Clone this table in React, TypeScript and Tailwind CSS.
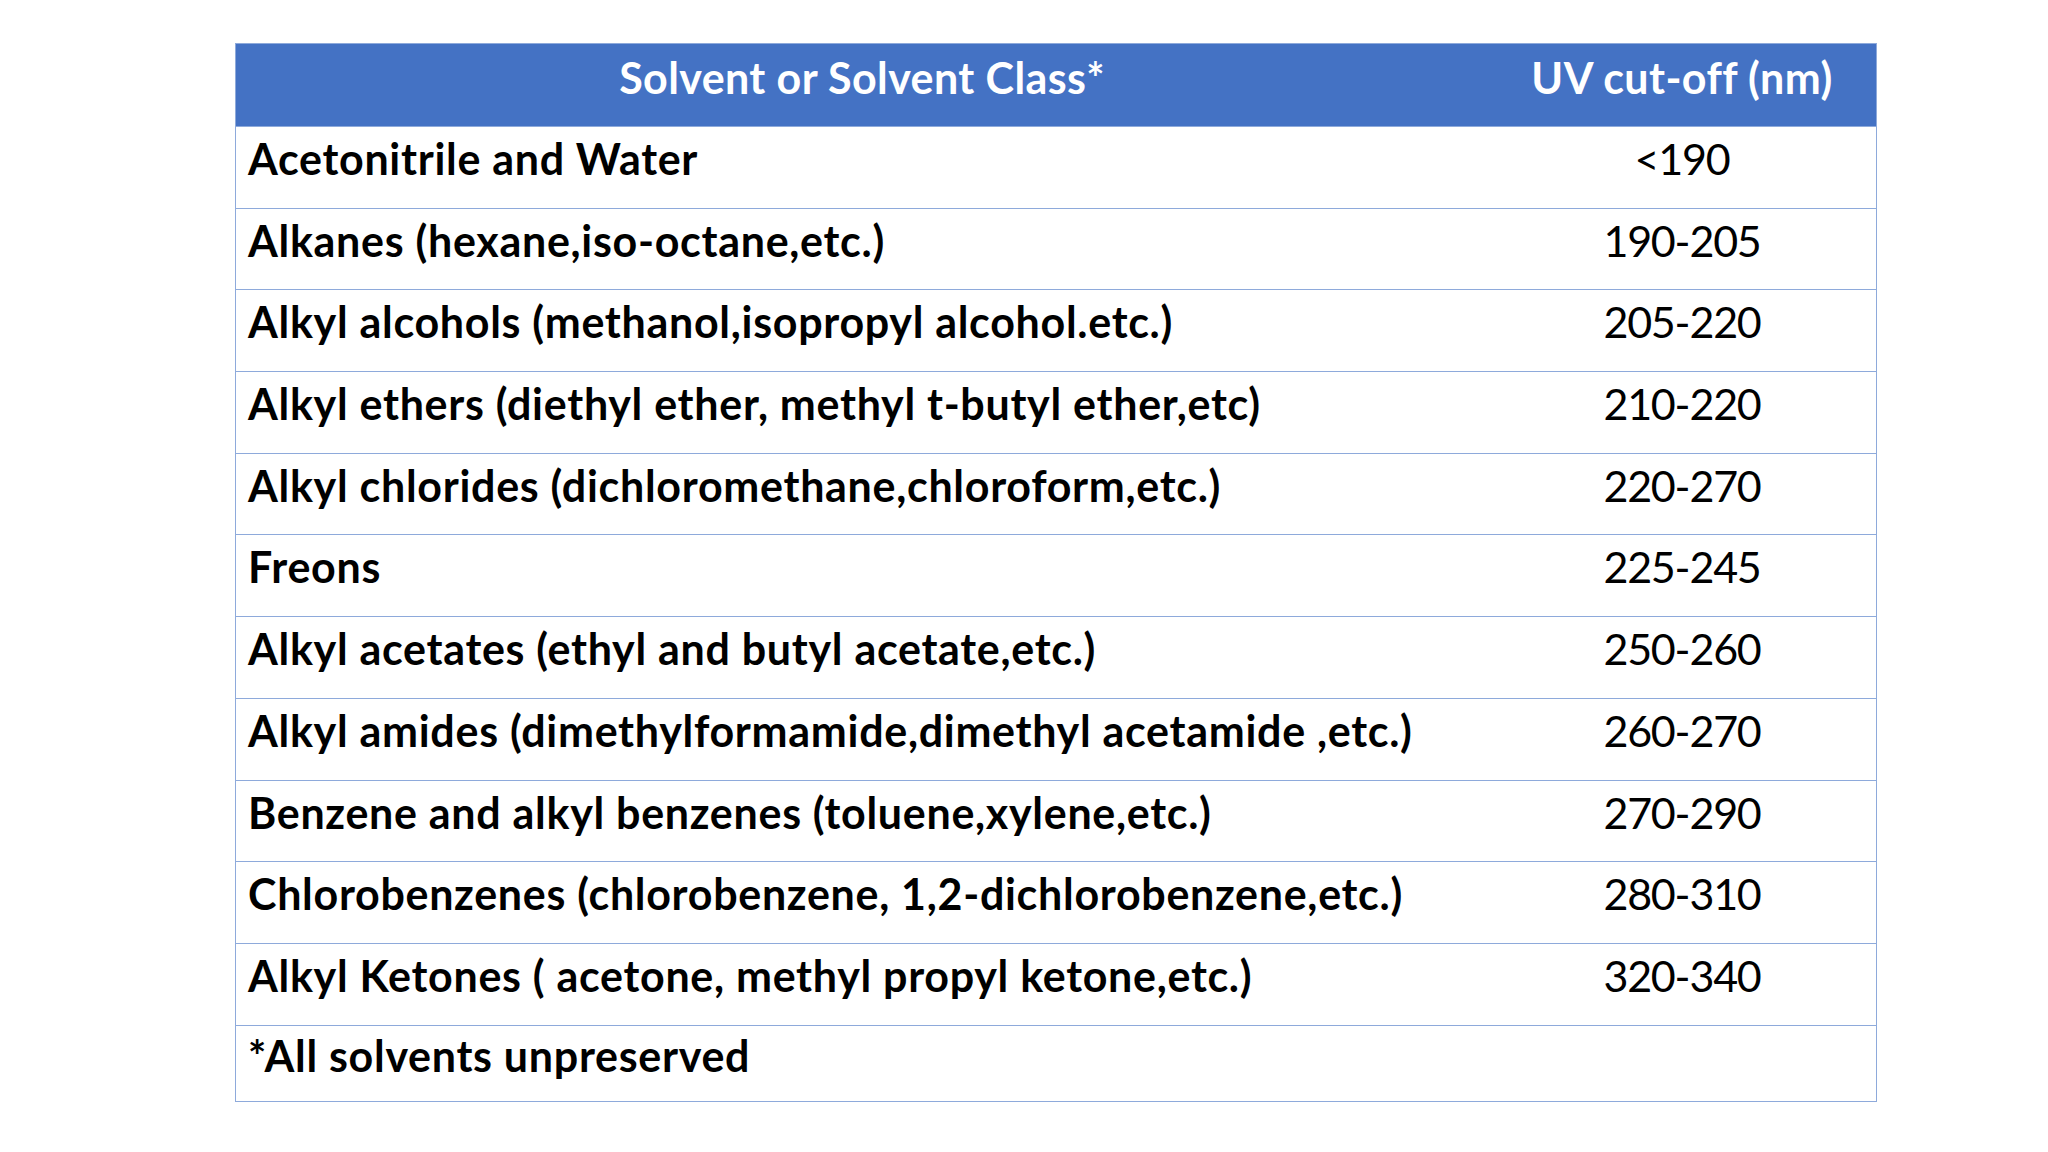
import React from "react";

const rows: [string, string][] = [
  ["Acetonitrile and Water", "<190"],
  ["Alkanes (hexane,iso-octane,etc.)", "190-205"],
  ["Alkyl alcohols (methanol,isopropyl alcohol.etc.)", "205-220"],
  ["Alkyl ethers (diethyl ether, methyl t-butyl ether,etc)", "210-220"],
  ["Alkyl chlorides (dichloromethane,chloroform,etc.)", "220-270"],
  ["Freons", "225-245"],
  ["Alkyl acetates (ethyl and butyl acetate,etc.)", "250-260"],
  ["Alkyl amides (dimethylformamide,dimethyl acetamide ,etc.)", "260-270"],
  ["Benzene and alkyl benzenes (toluene,xylene,etc.)", "270-290"],
  ["Chlorobenzenes (chlorobenzene, 1,2-dichlorobenzene,etc.)", "280-310"],
  ["Alkyl Ketones ( acetone, methyl propyl ketone,etc.)", "320-340"],
];

export default function App() {
  return (
    <div
      className="w-[2048px] h-[1152px] bg-white pl-[235px] pt-[43px]"
      style={{ fontFamily: "Lato, 'Open Sans', sans-serif" }}
    >
      <div className="w-[1642px] border border-[#8eaadb] text-black">
        <div className="flex h-[82px] bg-[#4472c4] text-white font-bold text-[43px] leading-[1.2] tracking-[0.4px]">
          <div className="w-[1252px] text-center pt-[8px]">Solvent or Solvent Class*</div>
          <div className="flex-1 text-center pt-[8px]">UV cut-off (nm)</div>
        </div>
        {rows.map(([a, b]) => (
          <div key={a} className="flex h-[81.7px] border-t border-[#8eaadb] text-[43px] leading-[1.2]">
            <div className="w-[1252px] pl-[12px] pt-[6px] font-bold tracking-[0.7px]">{a}</div>
            <div className="flex-1 text-center pt-[6px] tracking-[-1.2px]">{b}</div>
          </div>
        ))}
        <div className="flex h-[76px] border-t border-[#8eaadb] text-[43px] leading-[1.2]">
          <div className="w-[1252px] pl-[12px] pt-[4px] font-bold tracking-[0.7px]">*All solvents unpreserved</div>
          <div className="flex-1" />
        </div>
      </div>
    </div>
  );
}
